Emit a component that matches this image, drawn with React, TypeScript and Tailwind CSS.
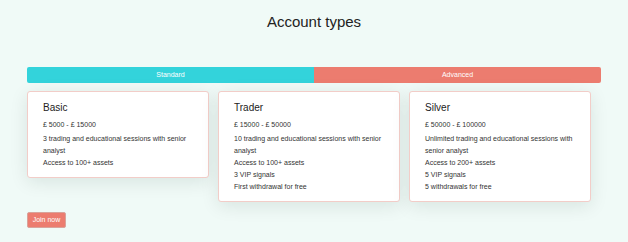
import React from 'react';

const plans = [
  {
    name: 'Basic',
    range: '£ 5000 - £ 15000',
    perks: ['3 trading and educational sessions with senior analyst', 'Access to 100+ assets'],
  },
  {
    name: 'Trader',
    range: '£ 15000 - £ 50000',
    perks: [
      '10 trading and educational sessions with senior analyst',
      'Access to 100+ assets',
      '3 VIP signals',
      'First withdrawal for free',
    ],
  },
  {
    name: 'Silver',
    range: '£ 50000 - £ 100000',
    perks: [
      'Unlimited trading and educational sessions with senior analyst',
      'Access to 200+ assets',
      '5 VIP signals',
      '5 withdrawals for free',
    ],
  },
];

const App = () => {
  return (
    <div className="min-h-[242px] w-[628px] bg-[#f0faf7] px-[27px] pt-[12px] font-['Liberation_Sans',Arial,sans-serif] text-[#333]">
      {/* TITLE */}
      <h1 className="text-center text-[15px] leading-[20px] text-[#222]">Account types</h1>

      {/* TABS */}
      <div className="mt-[35px] flex h-[16px] w-[574px] text-[7px] leading-[16px] text-white">
        <div className="flex-1 rounded-l-[2px] bg-[#33d3db] text-center">Standard</div>
        <div className="flex-1 rounded-r-[2px] bg-[#ec7c6f] text-center">Advanced</div>
      </div>

      {/* CARDS */}
      <div className="mt-[8px] flex items-start gap-[9px]">
        {plans.map(plan => (
          <div
            key={plan.name}
            className="w-[182px] rounded-[3px] border border-[#f2cdc8] bg-white px-[15px] pb-[8px] pt-[9px] shadow-[0_4px_18px_rgba(0,40,30,0.10)]"
          >
            <div className="text-[10px] leading-[14px] text-[#222]">{plan.name}</div>
            <div className="mt-[5px] text-[7px] leading-[10px]">{plan.range}</div>
            <ul className="mt-[3px] text-[7px] leading-[12px]">
              {plan.perks.map(p => (
                <li key={p}>{p}</li>
              ))}
            </ul>
          </div>
        ))}
      </div>

      {/* JOIN */}
      <button className="mt-[10px] h-[16px] w-[39px] rounded-[2px] border border-[#d9a39b] bg-[#ec7c6f] text-[7px] leading-[14px] text-white">
        Join now
      </button>
    </div>
  );
};

export default App;
